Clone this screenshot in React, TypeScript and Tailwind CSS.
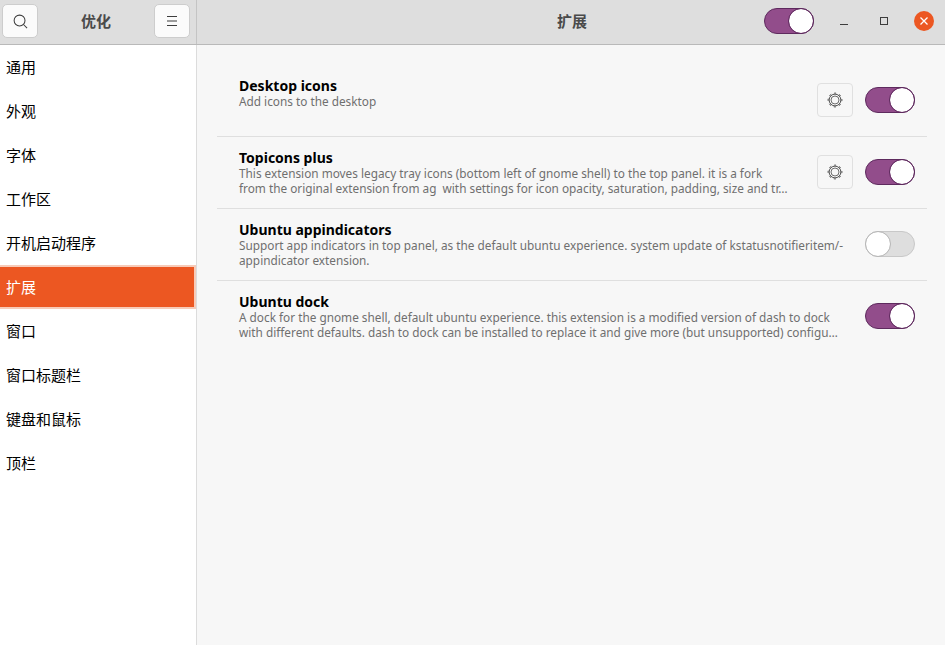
import React from "react";

const sections = ["通用", "外观", "字体", "工作区", "开机启动程序", "扩展", "窗口", "窗口标题栏", "键盘和鼠标", "顶栏"];

const extensions = [
  {
    name: "Desktop icons",
    description: "Add icons to the desktop",
    settings: true,
    on: true,
  },
  {
    name: "Topicons plus",
    description:
      "This extension moves legacy tray icons (bottom left of gnome shell) to the top panel. it is a fork\nfrom the original extension from ag  with settings for icon opacity, saturation, padding, size and tr…",
    settings: true,
    on: true,
  },
  {
    name: "Ubuntu appindicators",
    description:
      "Support app indicators in top panel, as the default ubuntu experience. system update of kstatusnotifieritem/-\nappindicator extension.",
    settings: false,
    on: false,
  },
  {
    name: "Ubuntu dock",
    description:
      "A dock for the gnome shell, default ubuntu experience. this extension is a modified version of dash to dock\nwith different defaults. dash to dock can be installed to replace it and give more (but unsupported) configu…",
    settings: false,
    on: true,
  },
];

const Toggle: React.FC<{ on: boolean }> = ({ on }) => (
  <div
    className={
      on
        ? "flex h-[26px] w-[50px] justify-end rounded-full border border-[#5e2a5e] bg-[#924d8b]"
        : "flex h-[26px] w-[50px] justify-start rounded-full border border-[#c8c8c8] bg-[#dedede]"
    }
  >
    <div
      className={
        on
          ? "h-[24px] w-[24px] rounded-full bg-white outline outline-1 outline-[#5e2a5e]"
          : "h-[24px] w-[24px] rounded-full bg-white outline outline-1 outline-[#b8b8b8]"
      }
    />
  </div>
);

const GearIcon = () => (
  <svg width="16" height="16" viewBox="0 0 16 16" fill="none" stroke="#4a4a4a">
    <circle cx="8" cy="8" r="4" strokeWidth="0.8" />
    <circle cx="8" cy="8" r="5.900" strokeWidth="1" />
    <circle
      cx="8"
      cy="8"
      r="6.900"
      strokeWidth="1"
      strokeDasharray="2.200 3.220"
      strokeDashoffset="1.100"
      transform="rotate(-90 8 8)"
    />
  </svg>
);

const HeaderButton: React.FC<{ children: React.ReactNode }> = ({ children }) => (
  <button className="flex h-[34px] w-[36px] items-center justify-center rounded-[5px] border border-[#cdcdcd] bg-[#fbfbfb]">
    {children}
  </button>
);

const App: React.FC = () => {
  return (
    <div className="flex h-[645px] w-[945px] flex-col overflow-hidden bg-[#f7f7f7] font-['Noto_Sans','Noto_Sans_CJK_SC',sans-serif] text-black">
      <header className="flex h-[45px] shrink-0 border-b border-[#b9b9b9] bg-[#dedede]">
        <div className="flex w-[197px] shrink-0 items-center justify-between border-r border-[#c4c4c4] pb-[2px] pl-[2px] pr-[6px]">
          <HeaderButton>
            <svg width="15" height="15" viewBox="0 0 16 16" fill="none" stroke="#3d3d3d" strokeWidth="1.1">
              <circle cx="7" cy="7" r="5.800" />
              <path d="M11.200 11.200l3.800 3.800" />
            </svg>
          </HeaderButton>
          <span className="text-[15px] font-bold text-[#4a4a4a]">优化</span>
          <HeaderButton>
            <svg width="12" height="12" viewBox="0 0 12 12" stroke="#3d3d3d" strokeWidth="1">
              <path d="M1 1.500h10M1 6h10M1 10.500h10" />
            </svg>
          </HeaderButton>
        </div>
        <div className="relative flex flex-1 items-center justify-center pb-[2px] pl-[2px]">
          <span className="text-[15px] font-bold text-[#4a4a4a]">扩展</span>
          <div className="absolute right-[11px] top-0 flex h-full items-center pb-[2px]">
            <Toggle on />
            <svg className="ml-[26px] mt-[2px]" width="8" height="8" viewBox="0 0 8 8" stroke="#3d3d3d">
              <path d="M0 6.500h8" />
            </svg>
            <svg className="ml-[32px]" width="8" height="8" viewBox="0 0 8 8" fill="none" stroke="#3d3d3d">
              <rect x="0.500" y="0.500" width="7" height="7" />
            </svg>
            <div className="ml-[26px] flex h-[20px] w-[20px] items-center justify-center rounded-full bg-[#ec5722]">
              <svg width="10" height="10" viewBox="0 0 10 10" stroke="#ffffff" strokeWidth="1.3">
                <path d="M1.500 1.500l7 7M8.500 1.500l-7 7" />
              </svg>
            </div>
          </div>
        </div>
      </header>

      <div className="flex min-h-0 flex-1">
        <nav className="w-[197px] shrink-0 border-r border-[#dcdcdc] bg-white">
          {sections.map((section) =>
            section === "扩展" ? (
              <div
                key={section}
                className="flex h-[44px] items-center border-y-2 border-r-2 border-[#f7cbb9] bg-[#ec5722] pl-[6px] text-[15px] text-white"
              >
                {section}
              </div>
            ) : (
              <div key={section} className="flex h-[44px] items-center pl-[6px] text-[15px]">
                {section}
              </div>
            ),
          )}
        </nav>

        <main className="flex-1 pl-[20px] pr-[18px] pt-[20px]">
          {extensions.map((extension, index) => (
            <div
              key={extension.name}
              className={
                index < 3
                  ? "flex h-[72px] items-start border-b border-[#dfdfdf] pl-[22px] pr-[12px]"
                  : "flex h-[72px] items-start pl-[22px] pr-[12px]"
              }
            >
              <div className="min-w-0 flex-1 pt-[13px]">
                <div className="text-[14px] font-bold leading-[16px] text-black">{extension.name}</div>
                <div className="w-fit whitespace-pre text-[11.800px] leading-[15px] text-[#6f6f6f]">
                  {extension.description}
                </div>
              </div>
              <div className="flex items-center gap-[12px] pt-[18px]">
                {extension.settings && (
                  <button className="flex h-[34px] w-[36px] items-center justify-center rounded-[4px] border border-[#e0e0e0] bg-[#f7f7f7]">
                    <GearIcon />
                  </button>
                )}
                <div className="py-[4px]">
                  <Toggle on={extension.on} />
                </div>
              </div>
            </div>
          ))}
        </main>
      </div>
    </div>
  );
};

export default App;
